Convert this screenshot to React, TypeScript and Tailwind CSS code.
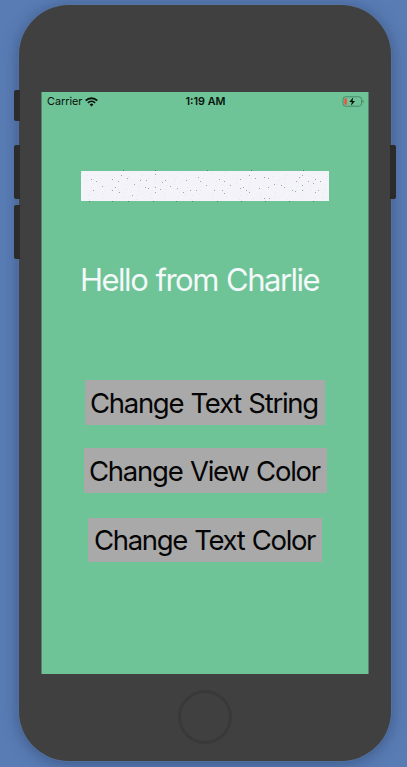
const darkSpecks: [number, number][] = [
  [10, 8], [15, 10], [21, 15], [31, 8], [31, 19], [34, 16], [37, 10], [38, 21], [40, 4], [46, 7], [51, 24], [53, 13], [59, 9], [64, 16], [65, 9], [74, 3], [74, 16], [74, 21], [79, 18],
  [81, 11], [84, 9], [89, 15], [96, 17], [102, 21], [105, 9], [109, 19], [115, 19], [117, 6], [119, 10], [125, 14], [133, 19], [138, 8], [141, 19], [143, 10], [143, 22], [149, 14],
  [159, 8], [159, 17], [162, 16], [165, 19], [168, 4], [168, 21], [174, 7], [178, 17], [183, 6], [183, 27], [187, 7], [188, 27], [193, 13], [200, 14], [203, 16], [211, 19], [214, 20],
  [215, 10], [218, 6], [221, 4], [221, 14], [221, 19], [227, 10], [232, 12], [234, 8], [234, 21], [237, 19], [239, 10],
  [12, 19], [67, 17], [187, 16],
];
const edgeSpecks: [number, number][] = [
  [42, -1], [74, -1], [126, -1], [170, -1], [222, -1], [8, 30], [31, 30], [47, 30], [72, 30], [95, 30], [111, 30], [136, 30], [160, 30], [184, 30], [208, 30], [232, 30],
];
const paleSpecks: [number, number][] = Array.from({ length: 150 }, (_, i) => [(i * 37) % 247, 1 + ((i * 17) % 28)]);

function TextField() {
  return (
    <div className="ml-[39px] h-[30px] w-[248px] bg-[#f3f3f9]">
      <svg className="block overflow-visible" width="248" height="30" shapeRendering="crispEdges">
        {paleSpecks.map(([x, y], i) => (
          <rect key={i} x={x} y={y} width="1" height="1" fill={i % 3 ? "#e5eaf0" : "#d0f2e3"} />
        ))}
        {darkSpecks.map(([x, y], i) => (
          <rect key={i} x={x} y={y} width="1" height="1" fill="#a3a3a8" />
        ))}
        {edgeSpecks.map(([x, y], i) => (
          <rect key={i} x={x} y={y} width="1" height="1" fill="#527692" />
        ))}
      </svg>
    </div>
  );
}

function StatusBar() {
  return (
    <div className="grid h-[18px] grid-cols-3 items-center pr-[4px] pl-[5px] leading-[18px] text-[#07120c]">
      <div className="flex items-center gap-[3px]">
        <span className="pt-px text-[10.8px]">Carrier</span>
        <svg width="13" height="10" viewBox="0 0 13 10" fill="none" stroke="#07120c">
          <path d="M.7 3.6a8.4 8.4 0 0 1 11.6 0" strokeWidth="1.9" />
          <path d="M2.9 5.9a5.2 5.2 0 0 1 7.2 0" strokeWidth="1.7" />
          <path d="M4.6 7.5a2.8 2.8 0 0 1 3.8 0L6.5 9.5z" fill="#07120c" stroke="none" />
        </svg>
      </div>
      <span className="pt-px text-center text-[10.8px] font-semibold whitespace-nowrap">1:19 AM</span>
      <svg className="justify-self-end" width="22" height="11" viewBox="0 0 22 11">
        <rect x="1" y=".8" width="18.5" height="9.4" rx="2.4" fill="none" stroke="#4b8a68" />
        <rect x="2.4" y="2.2" width="2.4" height="6.6" rx=".8" fill="#f34b3e" />
        <path d="M11.2 1.2 7.4 6h2.4l-.8 3.8L13 5h-2.5z" fill="#06100a" stroke="#6fc397" strokeWidth=".8" paintOrder="stroke" />
        <path d="M21 4v3" stroke="#4b8a68" />
      </svg>
    </div>
  );
}

export default function App() {
  return (
    <div className="relative h-[767px] w-[407px] overflow-hidden bg-[#597cb4] pt-[5px] pl-[19px] font-['Inter','Liberation_Sans',sans-serif]">
      <main className="flex h-[756px] w-[372px] flex-col rounded-[50px] bg-[#404040] pt-[87px] pl-[22px] shadow-[0_0_0_1px_#627b9e66,0_2px_16px_#1e325580]">
        <section className="h-[582px] w-[328px] border-x border-[#57826b] bg-[#6ec397]">
          <StatusBar />
          <div className="h-[61px]" />
          <TextField />
          <h1 className="mt-[59px] ml-[38px] h-[40px] text-[31px] leading-[40px] font-normal tracking-[-1.5px] [word-spacing:1px] whitespace-nowrap text-[#f3f8f8]">Hello from Charlie</h1>
          <div className="mt-[80px] flex flex-col text-[27.5px] leading-[44px] text-[#050505]">
            <button className="ml-[43px] h-[45px] w-[240px] bg-[#a9a9a9] pl-[5px] text-left tracking-[-1.3px] [word-spacing:1px] whitespace-nowrap">Change Text String</button>
            <button className="mt-[23px] ml-[42px] h-[45px] w-[243px] bg-[#a9a9a9] pl-[5px] text-left tracking-[-1.25px] [word-spacing:1px] whitespace-nowrap">Change View Color</button>
            <button className="mt-[25px] ml-[46px] h-[44px] w-[234px] bg-[#a9a9a9] pl-[6px] text-left tracking-[-1.35px] [word-spacing:1px] whitespace-nowrap">Change Text Color</button>
          </div>
        </section>
        <div className="mt-[16px] ml-[137px] h-[54px] w-[54px] rounded-full border-[3px] border-[#393939]" />
      </main>
      <div className="absolute top-[90px] left-[14px] h-[31px] w-[6px] rounded-l-[2px] bg-[#2b2b2b]" />
      <div className="absolute top-[145px] left-[14px] h-[54px] w-[6px] rounded-l-[2px] bg-[#2b2b2b]" />
      <div className="absolute top-[205px] left-[14px] h-[54px] w-[6px] rounded-l-[2px] bg-[#2b2b2b]" />
      <div className="absolute top-[145px] left-[390px] h-[54px] w-[6px] rounded-r-[2px] bg-[#2b2b2b]" />
    </div>
  );
}
